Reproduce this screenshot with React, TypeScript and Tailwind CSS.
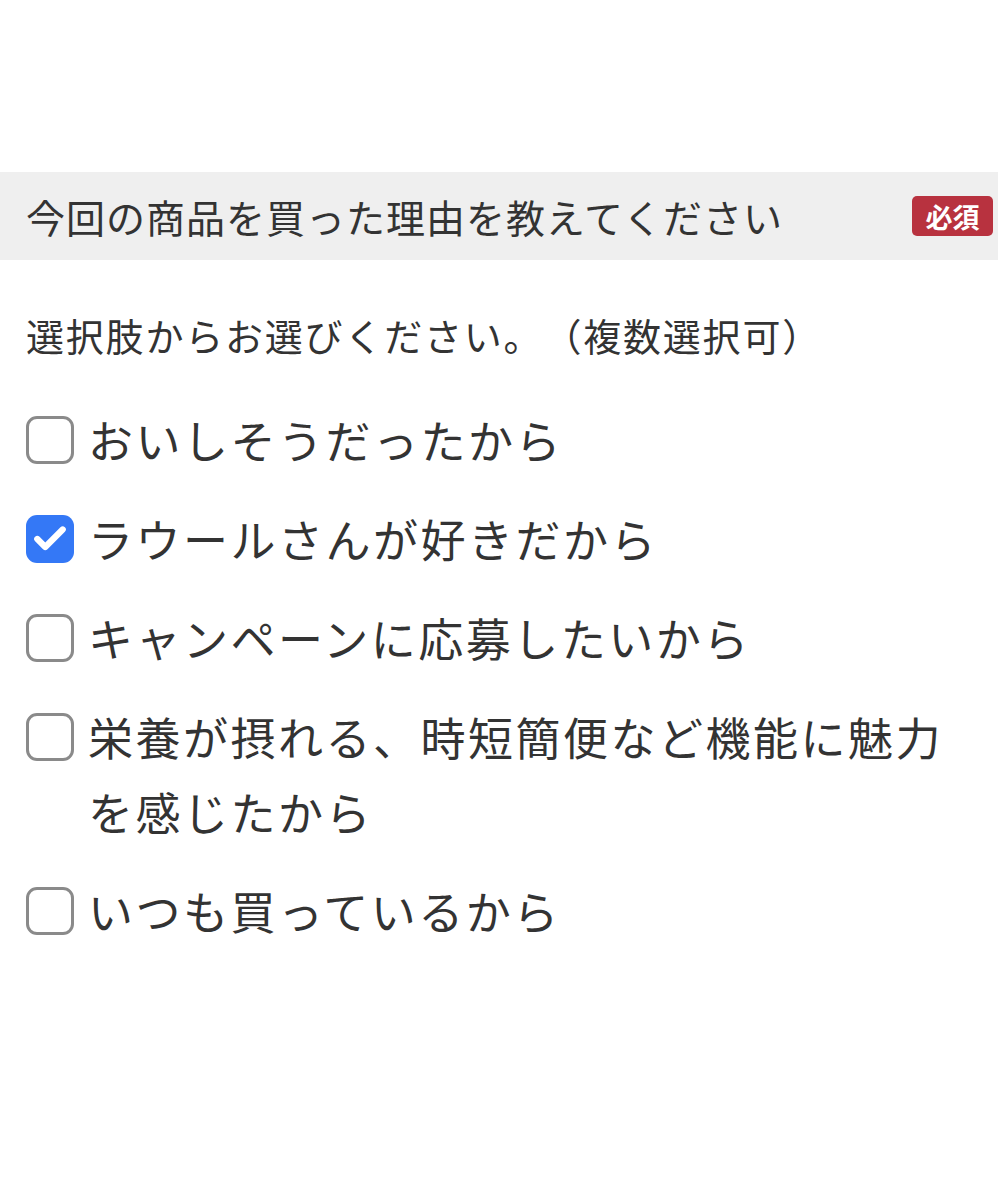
import { Check } from "lucide-react";

const options = [
  { label: "おいしそうだったから", checked: false },
  { label: "ラウールさんが好きだから", checked: true },
  { label: "キャンペーンに応募したいから", checked: false },
  { label: "栄養が摂れる、時短簡便など機能に魅力を感じたから", checked: false },
  { label: "いつも買っているから", checked: false },
];

function Box({ checked }: { checked: boolean }) {
  if (checked) {
    return (
      <span className="flex h-[48px] w-[48px] shrink-0 items-center justify-center rounded-[11px] bg-[#3478f6]">
        <Check className="h-[38px] w-[38px] text-white" strokeWidth={4} />
      </span>
    );
  }
  return <span className="block h-[48px] w-[48px] shrink-0 rounded-[11px] border-[3px] border-[#8a8a8a] bg-white" />;
}

export default function App() {
  return (
    <div
      className="min-h-[1200px] w-[998px] bg-white pt-[172px] text-[#333333] [text-spacing-trim:space-all]"
      style={{ fontFamily: '"Noto Sans CJK JP", "Noto Sans", sans-serif' }}
    >
      <div className="flex h-[88px] items-center justify-between bg-[#efefef] pl-[26px] pr-[5px]">
        <h2 className="text-[39px] leading-none tracking-[1px]">今回の商品を買った理由を教えてください</h2>
        <span className="flex h-[40px] w-[81px] items-center justify-center rounded-[5px] bg-[#b8323f] text-[27px] font-bold leading-none text-white">
          必須
        </span>
      </div>

      <p className="mt-[50px] pl-[26px] text-[38px] leading-[50px] tracking-[1.8px]">選択肢からお選びください。（複数選択可）</p>

      <ul className="mt-[42px] flex flex-col gap-[24px] pl-[26px] pr-[30px]">
        {options.map((o) => (
          <li key={o.label} className="flex items-start gap-[14px]">
            <span className="flex h-[75px] items-center">
              <Box checked={o.checked} />
            </span>
            <span className="text-[45px] leading-[75px] tracking-[2.5px]">{o.label}</span>
          </li>
        ))}
      </ul>
    </div>
  );
}
